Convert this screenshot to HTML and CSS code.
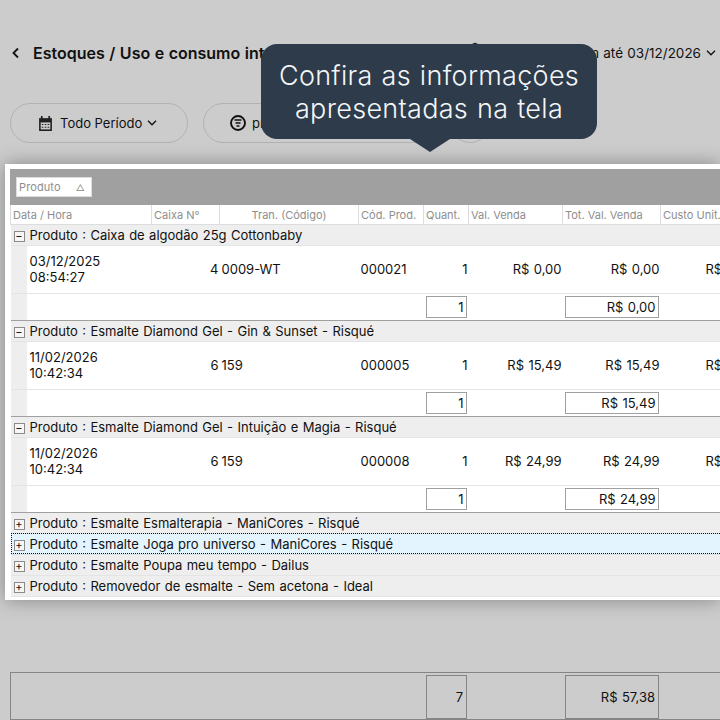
FILE: index.html
```html
<!DOCTYPE html>
<html lang="pt-BR">
<head>
    <meta charset="UTF-8">
    <title>Estoques - Uso e consumo interno</title>
    <link rel="stylesheet" href="styles.css">
</head>
<body>
    <div class="page">
        <div class="top-bar">
            <svg class="back" width="10" height="12" viewBox="0 0 10 12"><path d="M7 1.500 2.500 6 7 10.500" fill="none" stroke="#111" stroke-width="1.800"/></svg>
            <h1>Estoques / Uso e consumo interno</h1>
            <svg class="bell" width="10" height="22" viewBox="0 0 10 22"><path d="M5 .8C2.500.8 1 3 .5 6h9C9 3 7.500.8 5 .8z" fill="#222"/></svg>
            <div class="date-range">
                <span>De 03/12/2025 em até 03/12/2026</span>
                <svg width="10" height="6" viewBox="0 0 10 6"><path d="M1 .8 5 4.800 9 .8" fill="none" stroke="#111" stroke-width="1.300"/></svg>
            </div>
        </div>

        <div class="filters">
            <button class="pill pill-period">
                <svg width="15" height="15" viewBox="0 0 14 14"><path d="M1 2h12v12H1z" fill="#222"/><path d="M3.500 0v3M10.500 0v3" stroke="#222" stroke-width="1.600"/><path d="M2.500 6h9v6.500h-9z" fill="#ccc"/><path d="M3.500 7.500h1.500v1H3.500zM6.300 7.500h1.500v1H6.300zM9 7.500h1.500v1H9zM3.500 10h1.500v1H3.500zM6.300 10h1.500v1H6.300zM9 10h1.500v1H9z" fill="#222"/></svg>
                <span>Todo Período</span>
                <svg width="10" height="6" viewBox="0 0 10 6"><path d="M1 .8 5 4.800 9 .8" fill="none" stroke="#111" stroke-width="1.300"/></svg>
            </button>
            <button class="pill pill-product">
                <svg width="16" height="16" viewBox="0 0 16 16"><circle cx="8" cy="8" r="7" fill="none" stroke="#111" stroke-width="1.900"/><path d="M4.500 5h7M5.500 8h5M6.500 11h3" stroke="#111" stroke-width="1.700"/></svg>
                <span>produto</span>
            </button>
            <button class="pill-round"></button>
        </div>

        <div class="grid-card">
            <div class="group-band">
                <div class="group-chip"><span>Produto</span><span class="sort">△</span></div>
            </div>
            <table class="grid">
                <colgroup>
                    <col class="c-date"><col class="c-caixa"><col class="c-tran"><col class="c-cod"><col class="c-qtd"><col class="c-val"><col class="c-tot"><col class="c-custo">
                </colgroup>
                <thead>
                    <tr>
                        <th>Data / Hora</th>
                        <th>Caixa N°</th>
                        <th class="center">Tran. (Código)</th>
                        <th>Cód. Prod.</th>
                        <th>Quant.</th>
                        <th>Val. Venda</th>
                        <th>Tot. Val. Venda</th>
                        <th>Custo Unit.</th>
                    </tr>
                </thead>
                <tbody>
                    <tr class="group"><td colspan="8"><span class="toggle">−</span>Produto : Caixa de algodão 25g Cottonbaby</td></tr>
                    <tr class="item">
                        <td class="date">03/12/2025<br>08:54:27</td>
                        <td class="right">4</td><td>0009-WT</td><td>000021</td>
                        <td class="right">1</td><td class="right">R$ 0,00</td><td class="right">R$ 0,00</td><td class="clip">R$ 0,00</td>
                    </tr>
                    <tr class="sum">
                        <td colspan="4"></td>
                        <td><div class="sum-box">1</div></td><td></td>
                        <td><div class="sum-box">R$ 0,00</div></td><td></td>
                    </tr>

                    <tr class="group"><td colspan="8"><span class="toggle">−</span>Produto : Esmalte Diamond Gel - Gin &amp; Sunset - Risqué</td></tr>
                    <tr class="item">
                        <td class="date">11/02/2026<br>10:42:34</td>
                        <td class="right">6</td><td>159</td><td>000005</td>
                        <td class="right">1</td><td class="right">R$ 15,49</td><td class="right">R$ 15,49</td><td class="clip">R$ 9,00</td>
                    </tr>
                    <tr class="sum">
                        <td colspan="4"></td>
                        <td><div class="sum-box">1</div></td><td></td>
                        <td><div class="sum-box">R$ 15,49</div></td><td></td>
                    </tr>

                    <tr class="group"><td colspan="8"><span class="toggle">−</span>Produto : Esmalte Diamond Gel - Intuição e Magia - Risqué</td></tr>
                    <tr class="item">
                        <td class="date">11/02/2026<br>10:42:34</td>
                        <td class="right">6</td><td>159</td><td>000008</td>
                        <td class="right">1</td><td class="right">R$ 24,99</td><td class="right">R$ 24,99</td><td class="clip">R$ 9,00</td>
                    </tr>
                    <tr class="sum">
                        <td colspan="4"></td>
                        <td><div class="sum-box">1</div></td><td></td>
                        <td><div class="sum-box">R$ 24,99</div></td><td></td>
                    </tr>

                    <tr class="group closed"><td colspan="8"><span class="toggle">+</span>Produto : Esmalte Esmalterapia - ManiCores - Risqué</td></tr>
                    <tr class="group closed focused"><td colspan="8"><span class="toggle">+</span>Produto : Esmalte Joga pro universo - ManiCores - Risqué</td></tr>
                    <tr class="group closed"><td colspan="8"><span class="toggle">+</span>Produto : Esmalte Poupa meu tempo - Dailus</td></tr>
                    <tr class="group closed"><td colspan="8"><span class="toggle">+</span>Produto : Removedor de esmalte - Sem acetona - Ideal</td></tr>
                </tbody>
            </table>
        </div>

        <div class="totals">
            <div class="total-box total-qtd">7</div>
            <div class="total-box total-val">R$ 57,38</div>
        </div>
    </div>

    <div class="tooltip">Confira as informações<br>apresentadas na tela</div>
</body>
</html>
```

FILE: styles.css
```css
* {
    margin: 0;
    padding: 0;
    box-sizing: border-box;
    font-family: Inter, 'Noto Sans', sans-serif;
}

body {
    background-color: #cccccc;
    width: 720px;
    height: 720px;
    overflow: hidden;
    position: relative;
    color: #111;
}

.page {
    height: 720px;
    display: flex;
    flex-direction: column;
}

/* top */
.top-bar {
    display: flex;
    align-items: center;
    height: 20px;
    margin-top: 43px;
    padding-left: 11px;
    padding-right: 4px;
}

.back {
    margin-right: 12px;
}

.top-bar h1 {
    width: 437px;
    font-size: 16px;
    font-weight: 600;
    word-spacing: 0.5px;
    white-space: nowrap;
}

.bell {
    flex-shrink: 0;
}

.date-range {
    margin-left: auto;
    display: flex;
    align-items: center;
    gap: 5px;
    font-size: 13.5px;
    word-spacing: 0.5px;
    white-space: nowrap;
}

.filters {
    display: flex;
    align-items: center;
    gap: 15px;
    margin-top: 40px;
    padding-left: 10px;
    height: 40px;
}

.pill {
    height: 40px;
    border: 1px solid #b2b2b2;
    border-radius: 20px;
    background: none;
    display: flex;
    align-items: center;
    font-size: 13px;
    color: #111;
}

.pill-period {
    width: 178px;
    padding-left: 27px;
    gap: 5px;
}

.pill-period span {
    margin-left: 2px;
}

.pill-product {
    width: 232px;
    padding-left: 26px;
    gap: 6px;
}

.pill-round {
    width: 40px;
    height: 40px;
    border: 1px solid #b2b2b2;
    border-radius: 50%;
    background: none;
}

/* grid */
.grid-card {
    margin-top: 21px;
    margin-left: 5px;
    width: 715px;
    height: 436px;
    padding: 5px 0 0 5px;
    background-color: white;
    box-shadow: 0 0 18px rgba(0, 0, 0, 0.35);
    overflow: hidden;
}

.group-band {
    height: 36px;
    background-color: #a0a0a0;
    padding: 8px 0 0 6px;
}

.group-chip {
    width: 76px;
    height: 20px;
    background-color: white;
    border: 1px solid #dddddd;
    display: flex;
    justify-content: space-between;
    align-items: center;
    padding: 0 6px 0 2px;
    font-size: 11px;
    letter-spacing: 0.1px;
    color: #8e8e8e;
}

.sort {
    font-size: 9px;
}

.grid {
    border-collapse: collapse;
    table-layout: fixed;
    width: 725px;
    font-size: 13px;
}

.c-date { width: 141px; }
.c-caixa { width: 68px; }
.c-tran { width: 139px; }
.c-cod { width: 65px; }
.c-qtd { width: 45px; }
.c-val { width: 94px; }
.c-tot { width: 98px; }
.c-custo { width: 75px; }

.grid th {
    height: 19px;
    font-size: 11px;
    font-weight: 400;
    color: #8e8e8e;
    text-align: left;
    padding: 1px 2px 0;
    border-right: 1px solid #dddddd;
    border-left: 1px solid #dddddd;
    border-bottom: 1px solid #dddddd;
    white-space: nowrap;
    overflow: hidden;
}

.grid th.center {
    text-align: center;
}

.grid td {
    word-spacing: 0.75px;
}

.group td {
    height: 21px;
    background-color: #eeeeee;
    border-bottom: 1px solid #e4e4e4;
    padding-left: 3px;
    white-space: nowrap;
}

.toggle {
    display: inline-flex;
    justify-content: center;
    align-items: center;
    width: 11px;
    height: 11px;
    margin-right: 5px;
    border: 1px solid #8a8a8a;
    background-color: #f6f6f6;
    font-size: 11px;
    line-height: 1;
    color: #111;
    vertical-align: 0;
}

.focused td {
    background-color: #e3f4fe;
    outline: 1px dotted #111;
    outline-offset: -1px;
}

.item td {
    height: 48px;
    background-color: white;
    border-bottom: 1px solid #e4e4e4;
    padding: 0 1px 0 2px;
    white-space: nowrap;
}

.item td.date {
    line-height: 16px;
    padding-left: 19px;
    box-shadow: inset 16px 0 0 #eeeeee;
}

.item td.right {
    text-align: right;
}

.item td.clip {
    padding-left: 45px;
}

.sum td {
    height: 27px;
    background-color: white;
    border-bottom: 1px solid #a0a0a0;
    padding: 0;
}

.sum td:first-child {
    box-shadow: inset 16px 0 0 #eeeeee;
}

.sum-box {
    height: 22px;
    margin-left: 2px;
    margin-right: 2px;
    border: 1px solid #a0a0a0;
    text-align: right;
    line-height: 20px;
    padding-right: 2px;
}

/* totals at the bottom */
.totals {
    position: relative;
    margin-top: 72px;
    margin-left: 10px;
    width: 720px;
    height: 48px;
    border: 1px solid #858585;
}

.total-box {
    position: absolute;
    top: 2px;
    height: 44px;
    border: 1px solid #858585;
    font-size: 13px;
    word-spacing: 0.75px;
    text-align: right;
    line-height: 42px;
    padding-right: 3px;
}

.total-qtd {
    left: 415px;
    width: 41px;
}

.total-val {
    left: 554px;
    width: 94px;
}

/* overlay hint */
.tooltip {
    position: absolute;
    left: 261px;
    top: 44px;
    width: 336px;
    height: 95px;
    background-color: #2d3b4b;
    border-radius: 16px;
    color: #f4f6f8;
    font-size: 27px;
    font-weight: 300;
    letter-spacing: 0.3px;
    word-spacing: 1px;
    line-height: 33px;
    text-align: center;
    padding-top: 15px;
}

.tooltip::after {
    content: "";
    position: absolute;
    left: 149px;
    top: 95px;
    border-left: 20px solid transparent;
    border-right: 20px solid transparent;
    border-top: 13px solid #2d3b4b;
}
```
